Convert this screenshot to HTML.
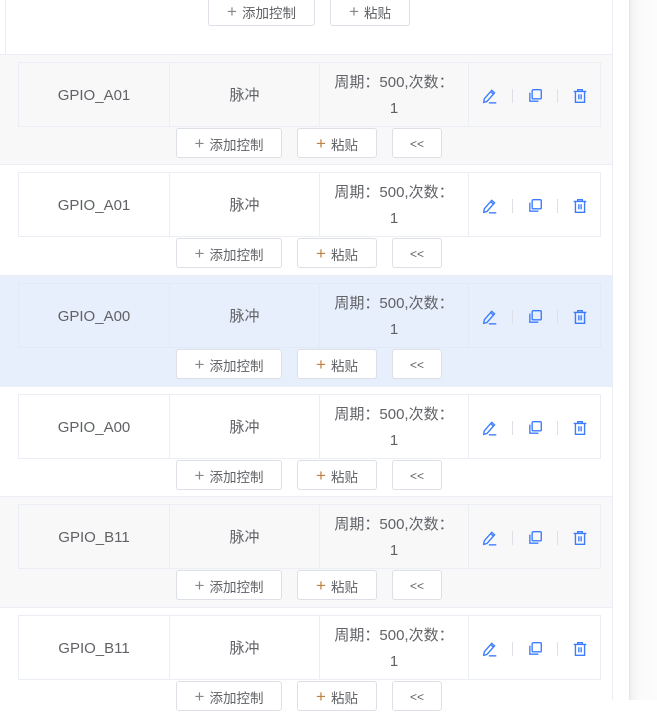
<!DOCTYPE html>
<html><head><meta charset="utf-8"><style>
*{box-sizing:border-box;margin:0;padding:0}
body{width:657px;height:700px;overflow:hidden;background:#fff;font-family:"Liberation Sans","Noto Sans CJK SC",sans-serif;color:#606266;font-size:14px;position:relative}
.main{position:absolute;left:0;top:0;width:613px;height:700px;border-right:1px solid #ebeef5;background:#fff}
.side{position:absolute;left:629px;top:0;width:28px;height:700px;background:linear-gradient(90deg,#e4e6ec 0,#f3f4f6 3px,#fafafa 10px,#fcfcfc 100%)}
.lb{position:absolute;left:5px;top:0;width:1px;height:54px;background:#ebeef5}
.row{position:absolute;left:0;width:612px;height:111px;border-top:1px solid #ebeef5}
.s{background:#f8f8f9}.h{background:#e7eefc}
.tbl{position:absolute;left:18px;top:7px;width:583px;height:65px;border:1px solid #ebeef5;display:flex}
.tbl>div{border-right:1px solid #ebeef5;display:flex;align-items:center;justify-content:center;text-align:center;line-height:26px;font-size:15px;padding-top:3px}
.tbl>div:last-child{border-right:none}
.c1{width:151px}.c2{width:150px}.c3{width:149px}.c4{flex:1;gap:0}
.btn{position:absolute;height:30px;border:1px solid #dcdfe6;border-radius:3px;background:#fff;display:flex;align-items:center;justify-content:center;font-size:13.5px;color:#606266;padding-top:1px}
.btn .p{font-size:17px;margin-right:5px;color:#888;font-weight:300}
.sep{width:1px;height:14px;background:#dcdfe6;margin:0 14px}
svg{display:block}
</style></head><body>
<div class="main">
<div class="lb"></div>
<div class="btn" style="left:208px;top:-4px;width:107px;height:30px"><span class="p">+</span>添加控制</div>
<div class="btn" style="left:330px;top:-4px;width:80px;height:30px"><span class="p">+</span>粘贴</div>

<div class="row s" style="top:54px">
<div class="tbl"><div class="c1">GPIO_A01</div><div class="c2">脉冲</div><div class="c3">周期：500,次数：<br>1</div><div class="c4">ICONS</div></div>
</div>
<div class="row" style="top:164px">
<div class="tbl"><div class="c1">GPIO_A01</div><div class="c2">脉冲</div><div class="c3">周期：500,次数：<br>1</div><div class="c4">ICONS</div></div>
</div>
<div class="row h" style="top:275px">
<div class="tbl" style="border-color:#e2e9f7"><div class="c1" style="border-color:#e2e9f7">GPIO_A00</div><div class="c2" style="border-color:#e2e9f7">脉冲</div><div class="c3" style="border-color:#e2e9f7">周期：500,次数：<br>1</div><div class="c4">ICONS</div></div>
</div>
<div class="row" style="top:386px">
<div class="tbl"><div class="c1">GPIO_A00</div><div class="c2">脉冲</div><div class="c3">周期：500,次数：<br>1</div><div class="c4">ICONS</div></div>
</div>
<div class="row s" style="top:496px">
<div class="tbl"><div class="c1">GPIO_B11</div><div class="c2">脉冲</div><div class="c3">周期：500,次数：<br>1</div><div class="c4">ICONS</div></div>
</div>
<div class="row" style="top:607px">
<div class="tbl"><div class="c1">GPIO_B11</div><div class="c2">脉冲</div><div class="c3">周期：500,次数：<br>1</div><div class="c4">ICONS</div></div>
</div>
</div>
<div class="side"></div>
<script>
var ic='<svg width="16" height="16" viewBox="0 0 14 14" fill="none" stroke="#3b7cff" stroke-width="1.2"><path d="M1.5 12.5 L2 9.5 L8.5 2 L11 4.2 L4.3 11.8 Z M7.5 3.2 L10 5.4"/><path d="M6 13 H12.5"/></svg><div class="sep"></div><svg width="16" height="16" viewBox="0 0 14 14" fill="none" stroke="#3b7cff" stroke-width="1.2"><rect x="4.5" y="1.5" width="8" height="8" rx="1"/><path d="M2.5 4 V11.5 H10"/></svg><div class="sep"></div><svg width="16" height="16" viewBox="0 0 14 14" fill="none" stroke="#3b7cff" stroke-width="1.2"><path d="M1.5 3 H12.5 M5 3 V1.5 H9 V3 M3 3 V12.5 H11 V3 M6 5.5 V10 M8 5.5 V10"/></svg>';
document.querySelectorAll('.c4').forEach(function(e){e.innerHTML=ic});
document.querySelectorAll('.row').forEach(function(r){
 r.insertAdjacentHTML('beforeend','<div class="btn" style="left:176px;top:73px;width:106px"><span class="p">+</span>添加控制</div><div class="btn" style="left:297px;top:73px;width:80px"><span class="p" style="color:#c08040">+</span>粘贴</div><div class="btn" style="left:392px;top:73px;width:50px;font-size:12px">&lt;&lt;</div>');
});
</script>
</body></html>
